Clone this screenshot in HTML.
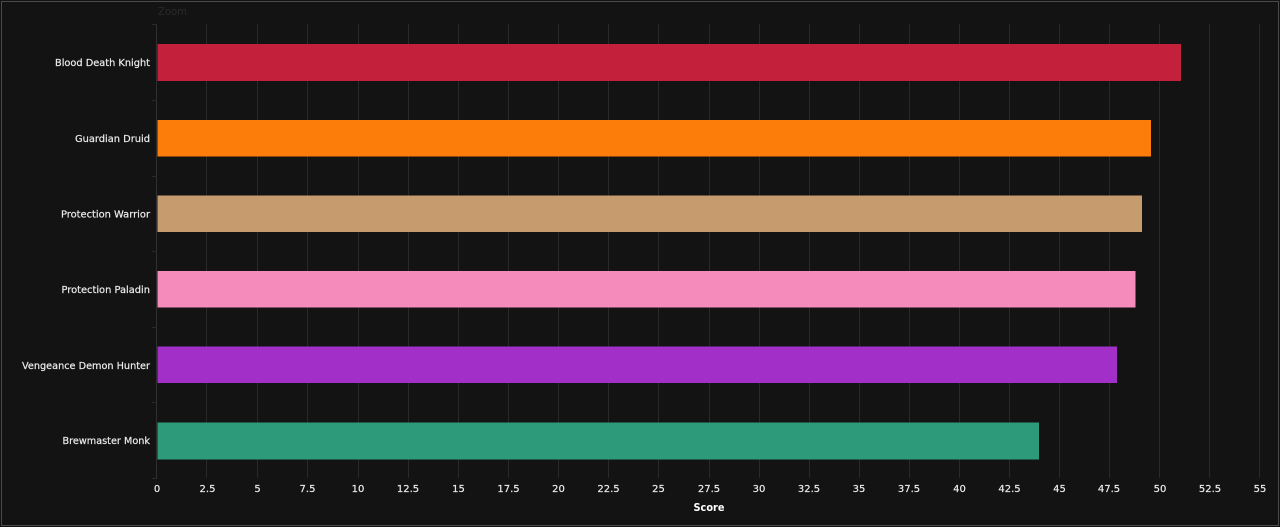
<!DOCTYPE html>
<html><head><meta charset="utf-8"><style>
html,body{margin:0;padding:0;background:#131313;width:1280px;height:527px;overflow:hidden}
svg{display:block}
text{font-family:"DejaVu Sans","Liberation Sans",sans-serif;font-size:10px;fill:#ececec;stroke:#ececec;stroke-width:.2px}
</style></head><body>
<svg width="1280" height="527" viewBox="0 0 1280 527" xmlns="http://www.w3.org/2000/svg">
<rect width="1280" height="527" fill="#131313"/>
<rect x="1.5" y="1.5" width="1277" height="524" fill="none" stroke="#4a4a4a" stroke-width="1"/>
<text x="158" y="15" style="font-size:11px;fill:#2a2a2a;stroke:none" textLength="29" lengthAdjust="spacingAndGlyphs">Zoom</text>
<g stroke="#292929" stroke-width="1" fill="none">
<path d="M206.500 24V478M257.500 24V478M307.500 24V478M358.500 24V478M408.500 24V478M458.500 24V478M508.500 24V478M558.500 24V478M608.500 24V478M658.500 24V478M709.500 24V478M759.500 24V478M809.500 24V478M859.500 24V478M909.500 24V478M959.500 24V478M1009.500 24V478M1059.500 24V478M1109.500 24V478M1159.500 24V478M1209.500 24V478M1259.500 24V478"/>
<path d="M156.500 24V478" stroke="#303030"/>
<path d="M152 24.500H157M152 100.500H157M152 176.500H157M152 251.500H157M152 327.500H157M152 402.500H157M152 478.500H157" stroke="#2a2a2a"/>
</g>
<rect x="157.500" y="44" width="1023.500" height="37" fill="#c3203c"/>
<rect x="157.500" y="120" width="993.500" height="36.500" fill="#fd7d0b"/>
<rect x="157.500" y="195.500" width="984.500" height="36.500" fill="#c69c6f"/>
<rect x="157.500" y="271" width="978" height="36.500" fill="#f48bba"/>
<rect x="157.500" y="346.500" width="959.500" height="36.500" fill="#a12fc8"/>
<rect x="157.500" y="422.500" width="881.500" height="37" fill="#2d9b79"/>
<g text-anchor="end">
<text x="150" y="66" textLength="95" lengthAdjust="spacingAndGlyphs">Blood Death Knight</text>
<text x="150" y="142" textLength="75" lengthAdjust="spacingAndGlyphs">Guardian Druid</text>
<text x="150" y="217.500" textLength="89" lengthAdjust="spacingAndGlyphs">Protection Warrior</text>
<text x="150" y="293" textLength="88.500" lengthAdjust="spacingAndGlyphs">Protection Paladin</text>
<text x="150" y="369" textLength="128" lengthAdjust="spacingAndGlyphs">Vengeance Demon Hunter</text>
<text x="150" y="444" textLength="87.500" lengthAdjust="spacingAndGlyphs">Brewmaster Monk</text>
</g>
<g text-anchor="middle">
<text x="157" y="492">0</text>
<text x="207.500" y="492">2.5</text>
<text x="257.500" y="492">5</text>
<text x="307.500" y="492">7.5</text>
<text x="358" y="492">10</text>
<text x="408" y="492">12.5</text>
<text x="458.500" y="492">15</text>
<text x="508.500" y="492">17.5</text>
<text x="558.500" y="492">20</text>
<text x="608.500" y="492">22.5</text>
<text x="658.500" y="492">25</text>
<text x="709" y="492">27.5</text>
<text x="759" y="492">30</text>
<text x="809" y="492">32.5</text>
<text x="859" y="492">35</text>
<text x="909" y="492">37.5</text>
<text x="959.500" y="492">40</text>
<text x="1009.500" y="492">42.5</text>
<text x="1059.500" y="492">45</text>
<text x="1109" y="492">47.5</text>
<text x="1160" y="492">50</text>
<text x="1210" y="492">52.5</text>
<text x="1260" y="492">55</text>
<text x="709" y="511" style="font-size:11px;font-weight:bold;fill:#fff;stroke:none" textLength="31" lengthAdjust="spacingAndGlyphs">Score</text>
</g>
</svg>
</body></html>
